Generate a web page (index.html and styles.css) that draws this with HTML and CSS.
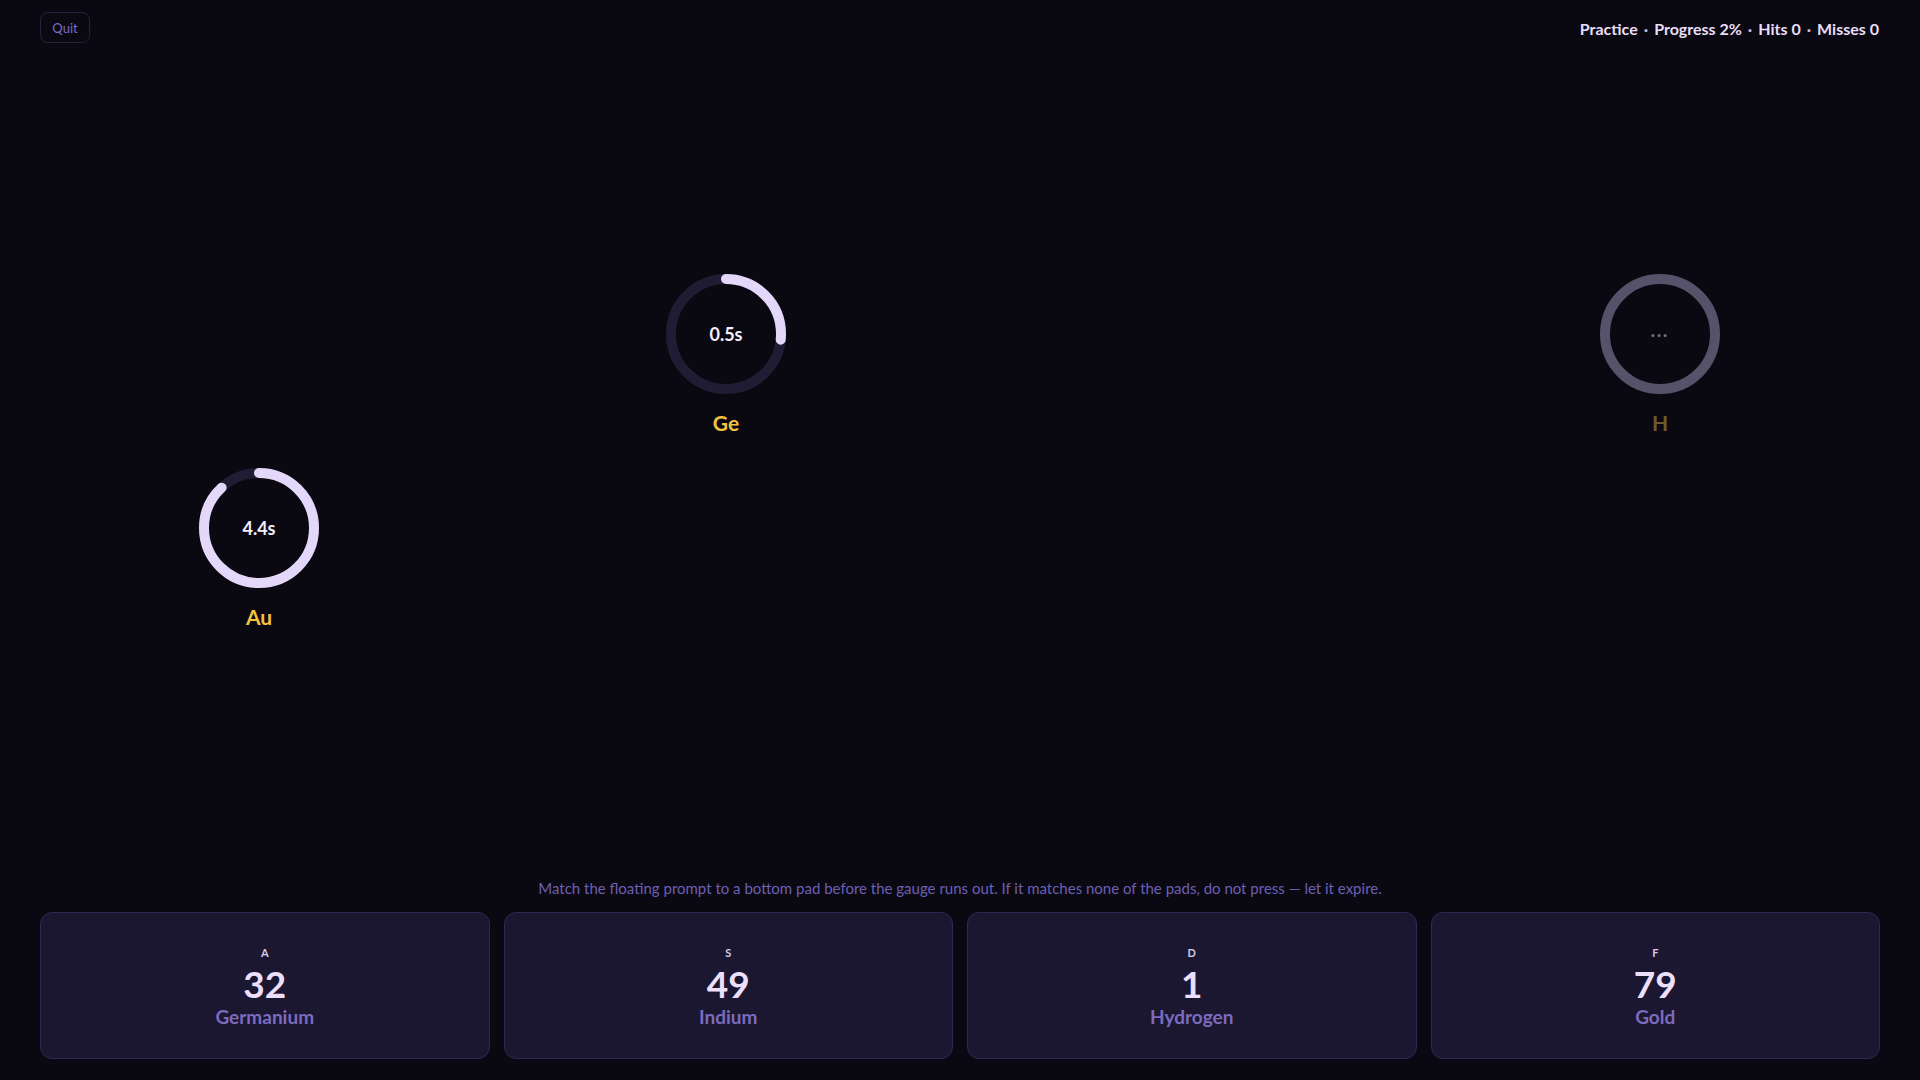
FILE: index.html
```html
<!DOCTYPE html>
<html lang="en">
<head>
    <meta charset="UTF-8">
    <meta name="viewport" content="width=device-width, initial-scale=1.0">
    <title>Element Match</title>
    <link rel="stylesheet" href="styles.css">
</head>
<body>

    <!-- Top bar -->
    <header class="top-bar">
        <button class="quit-btn">Quit</button>
        <div class="stats">
            <span>Practice</span>
            <span class="sep">·</span>
            <span>Progress 2%</span>
            <span class="sep">·</span>
            <span>Hits 0</span>
            <span class="sep">·</span>
            <span>Misses 0</span>
        </div>
    </header>

    <!-- Floating prompts -->
    <main class="field">
        <div class="gauge gauge-ge">
            <div class="ring">
                <svg viewBox="0 0 120 120" width="120" height="120">
                    <circle class="track" cx="60" cy="60" r="55"></circle>
                    <circle class="arc" cx="60" cy="60" r="55" stroke-dasharray="92 400" transform="rotate(-90 60 60)"></circle>
                </svg>
                <span class="time">0.5s</span>
            </div>
            <div class="symbol">Ge</div>
        </div>

        <div class="gauge gauge-h waiting">
            <div class="ring">
                <svg viewBox="0 0 120 120" width="120" height="120">
                    <circle class="track" cx="60" cy="60" r="55"></circle>
                </svg>
                <span class="time">···</span>
            </div>
            <div class="symbol">H</div>
        </div>

        <div class="gauge gauge-au">
            <div class="ring">
                <svg viewBox="0 0 120 120" width="120" height="120">
                    <circle class="track" cx="60" cy="60" r="55"></circle>
                    <circle class="arc" cx="60" cy="60" r="55" stroke-dasharray="304 400" transform="rotate(-90 60 60)"></circle>
                </svg>
                <span class="time">4.4s</span>
            </div>
            <div class="symbol">Au</div>
        </div>
    </main>

    <p class="hint">Match the floating prompt to a bottom pad before the gauge runs out. If it matches none of the pads, do not press — let it expire.</p>

    <!-- Answer pads -->
    <section class="pads">
        <button class="pad">
            <span class="key">A</span>
            <span class="number">32</span>
            <span class="name">Germanium</span>
        </button>
        <button class="pad">
            <span class="key">S</span>
            <span class="number">49</span>
            <span class="name">Indium</span>
        </button>
        <button class="pad">
            <span class="key">D</span>
            <span class="number">1</span>
            <span class="name">Hydrogen</span>
        </button>
        <button class="pad">
            <span class="key">F</span>
            <span class="number">79</span>
            <span class="name">Gold</span>
        </button>
    </section>

</body>
</html>
```

FILE: styles.css
```css
/* General */
body {
    margin: 0;
    height: 100vh;
    display: flex;
    flex-direction: column;
    background: #0a0912;
    color: #e6dcf5;
    font-family: 'Lato', 'Noto Sans', sans-serif;
    overflow: hidden;
}

button {
    font-family: inherit;
}

/* Top bar */
.top-bar {
    display: flex;
    justify-content: space-between;
    align-items: center;
    padding: 12px 41px 12px 40px;
}

.quit-btn {
    width: 50px;
    height: 31px;
    background: transparent;
    border: 1px solid #27223b;
    border-radius: 8px;
    color: #7d6cc4;
    font-size: 13px;
    padding: 0;
    cursor: pointer;
}

.stats {
    display: flex;
    gap: 6px;
    font-size: 16px;
    font-weight: 700;
    color: #e8def7;
    margin-top: 1px;
}

.stats .sep {
    color: #c9bfdc;
}

/* Floating prompts */
.field {
    flex: 1;
    position: relative;
}

.gauge {
    position: absolute;
    width: 120px;
    display: flex;
    flex-direction: column;
    align-items: center;
}

.gauge-ge { left: 666px; top: 219px; }
.gauge-h  { left: 1600px; top: 219px; }
.gauge-au { left: 199px; top: 413px; }

.ring {
    position: relative;
    width: 120px;
    height: 120px;
}

.ring svg {
    display: block;
}

.ring circle {
    fill: none;
    stroke-width: 10;
}

.track {
    stroke: #201c33;
}

.arc {
    stroke: #e4d8fa;
    stroke-linecap: round;
}

.time {
    position: absolute;
    inset: 0;
    display: flex;
    align-items: center;
    justify-content: center;
    font-size: 18px;
    font-weight: 700;
    color: #f4eefc;
}

.symbol {
    margin-top: 17px;
    font-size: 21px;
    line-height: 24px;
    font-weight: 700;
    color: #f2c23e;
}

/* Waiting prompt */
.waiting .track {
    stroke: #56526a;
}

.waiting .time {
    color: #77738a;
    font-size: 15px;
    letter-spacing: 2px;
}

.waiting .symbol {
    color: #6d5a2c;
}

/* Hint */
.hint {
    margin: 0 0 14px;
    text-align: center;
    font-size: 15px;
    line-height: 20px;
    color: #6e5fb2;
}

/* Pads */
.pads {
    display: grid;
    grid-template-columns: repeat(4, 1fr);
    gap: 14px;
    padding: 0 40px 21px;
}

.pad {
    height: 147px;
    display: flex;
    flex-direction: column;
    align-items: center;
    justify-content: center;
    background: #1b1730;
    border: 1px solid #2f2852;
    border-radius: 12px;
    padding: 3px 0 0;
    cursor: pointer;
}

.key {
    font-size: 11px;
    line-height: 14px;
    font-weight: 700;
    color: #d6cbe8;
}

.number {
    margin-top: 4px;
    font-size: 37px;
    line-height: 40px;
    font-weight: 700;
    color: #ecdffb;
}

.name {
    margin-top: 2px;
    font-size: 19px;
    line-height: 22px;
    font-weight: 700;
    color: #7b6bbf;
}
```
